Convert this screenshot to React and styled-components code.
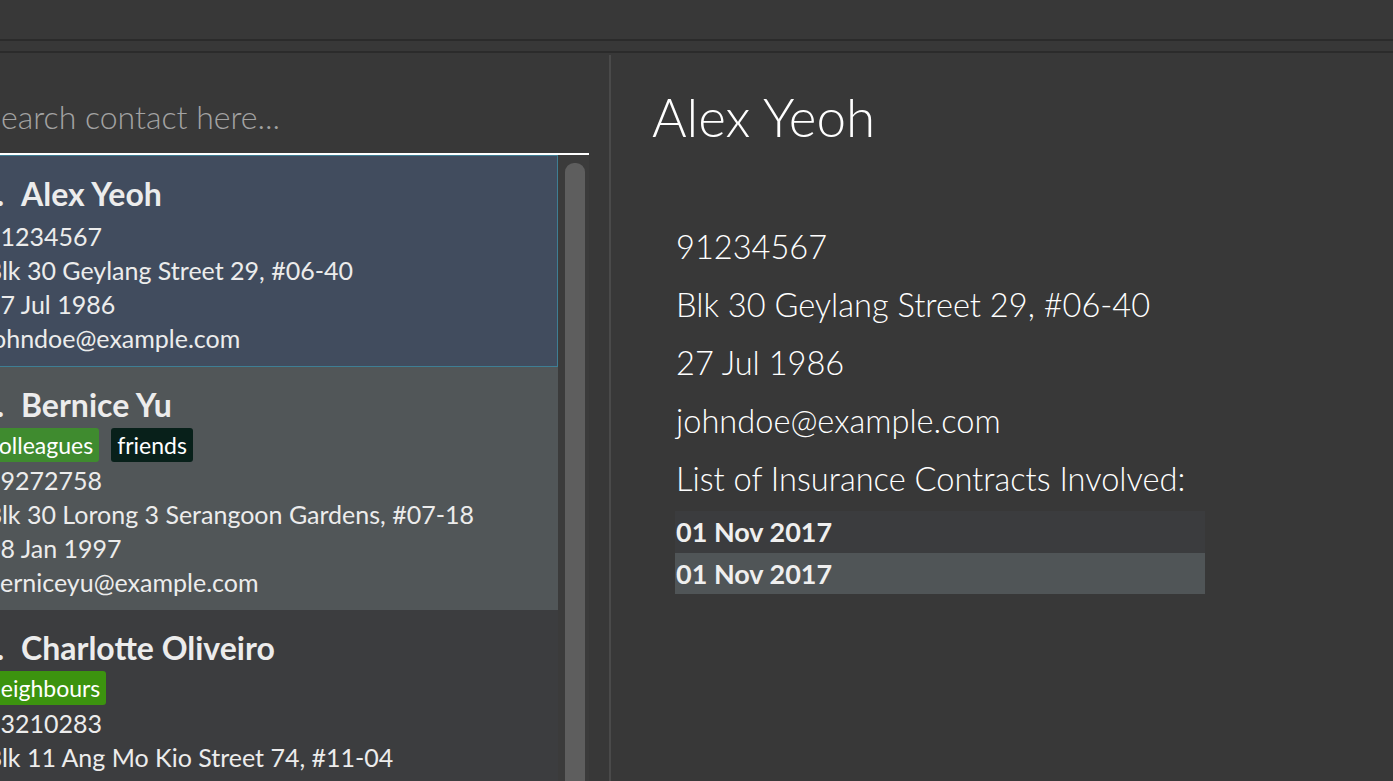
import React from 'react';
import styled, {createGlobalStyle} from 'styled-components';

const GlobalStyle = createGlobalStyle`
  html, body {
    margin: 0;
    padding: 0;
    background: #383838;
    overflow: hidden;
  }
  body {
    font-family: Lato, "Open Sans", sans-serif;
  }
`

const contacts = [
  {
    name: 'Alex Yeoh',
    tags: [],
    phone: '91234567',
    address: 'Blk 30 Geylang Street 29, #06-40',
    birthday: '27 Jul 1986',
    email: 'johndoe@example.com',
  },
  {
    name: 'Bernice Yu',
    tags: [{label: 'colleagues', color: '#3f8b2f'}, {label: 'friends', color: '#08201a'}],
    phone: '99272758',
    address: 'Blk 30 Lorong 3 Serangoon Gardens, #07-18',
    birthday: '08 Jan 1997',
    email: 'berniceyu@example.com',
  },
  {
    name: 'Charlotte Oliveiro',
    tags: [{label: 'neighbours', color: '#3c930f'}],
    phone: '93210283',
    address: 'Blk 11 Ang Mo Kio Street 74, #11-04',
    birthday: '11 Mar 1995',
    email: 'charlotte@example.com',
  },
]

const contracts = ['01 Nov 2017', '01 Nov 2017']

// top level
const Window = styled.div`
  width: 1393px;
  height: 781px;
  display: flex;
  flex-direction: column;
  background: #383838;
  overflow: hidden;
`

const MenuBar = styled.div`
  height: 39px;
  flex: none;
  background: #383838;
  border-bottom: 2px solid #2b2b2b;
`

const StatusBand = styled.div`
  height: 10px;
  flex: none;
  background: #383838;
  border-bottom: 2px solid #2b2b2b;
`

const Main = styled.div`
  flex: 1;
  display: flex;
  min-height: 0;
`

// left pane
const ListPane = styled.div`
  width: 589px;
  flex: none;
  padding-right: 20px;
  overflow: hidden;
  display: flex;
  flex-direction: column;
`

const ListInner = styled.div`
  margin-left: -30px;
  display: flex;
  flex-direction: column;
  flex: 1;
  min-height: 0;
`

const SearchBox = styled.div`
  height: 102px;
  flex: none;
  display: flex;
  align-items: center;
  padding-left: 14px;
  padding-top: 26px;
  box-sizing: border-box;
  border-bottom: 2px solid #ffffff;
  font-weight: 300;
  font-size: 32px;
  color: #a3a3a3;
  white-space: nowrap;
`

const ListRow = styled.div`
  flex: 1;
  display: flex;
  min-height: 0;
`

const CardColumn = styled.div`
  flex: 1;
  display: flex;
  flex-direction: column;
`

const Card = styled.div`
  flex: none;
  box-sizing: border-box;
  padding: ${p => p.selected ? '19px 0 11px 15px' : '19px 0 11px 16px'};
  background: ${p => p.bg};
  border: ${p => p.selected ? '1px solid #3e7e94' : 'none'};
  color: #ececec;
`

const NameRow = styled.div`
  display: flex;
  height: 36px;
  align-items: center;
  font-size: 32px;
  font-weight: 700;
  white-space: nowrap;
`

const Index = styled.span`
  width: 43px;
  margin-left: -8px;
  flex: none;
`

const TagRow = styled.div`
  display: flex;
  gap: 12px;
  margin-top: 6px;
  margin-left: -4px;
`

const Tag = styled.span`
  height: 34px;
  line-height: 34px;
  padding: 0 6px;
  border-radius: 3px;
  background: ${p => p.color};
  color: #ffffff;
  font-size: 23px;
  white-space: nowrap;
`

const InfoBlock = styled.div`
  margin-top: ${p => p.afterTags ? '1px' : '8px'};
`

const InfoLine = styled.div`
  height: 34px;
  line-height: 34px;
  font-size: 25px;
  white-space: nowrap;
`

const ScrollTrack = styled.div`
  width: 31px;
  flex: none;
  box-sizing: border-box;
  padding: 8px 4px 0 7px;
  background: #3b3b3b;
`

const ScrollThumb = styled.div`
  height: 100%;
  background: #5e5e5e;
  border-radius: 9px 9px 0 0;
`

const Divider = styled.div`
  width: 2px;
  flex: none;
  background: #4a4a4a;
  margin-top: 2px;
`

// right pane
const DetailPane = styled.div`
  flex: 1;
  padding: 34px 0 0 41px;
  color: #ffffff;
  font-weight: 300;
`

const Heading = styled.div`
  height: 60px;
  line-height: 60px;
  font-size: 53px;
  white-space: nowrap;
`

const DetailBody = styled.div`
  margin-top: 71px;
  margin-left: 24px;
`

const DetailLine = styled.div`
  height: 58px;
  line-height: 58px;
  font-size: 32.6px;
  white-space: nowrap;
`

const ContractTable = styled.div`
  width: 530px;
  margin-top: 3px;
  margin-left: -1px;
  display: flex;
  flex-direction: column;
`

const ContractRow = styled.div`
  height: ${p => p.h}px;
  line-height: ${p => p.h}px;
  padding-left: 1px;
  background: ${p => p.odd ? '#505557' : '#3b3c3e'};
  color: #efefef;
  font-size: 27px;
  font-weight: 700;
`

const cardBg = (i, selected) => {
  if (selected) return '#414c5e';
  return i % 2 === 1 ? '#515658' : '#3c3d3f';
}

const renderCard = (c, i) => {
  const selected = i === 0;
  return <Card key={c.name} selected={selected} bg={cardBg(i, selected)}>
    <NameRow>
      <Index>{i + 1}.</Index>
      {c.name}
    </NameRow>
    {c.tags.length > 0 && <TagRow>
      {c.tags.map(t => <Tag key={t.label} color={t.color}>{t.label}</Tag>)}
    </TagRow>}
    <InfoBlock afterTags={c.tags.length > 0}>
      <InfoLine>{c.phone}</InfoLine>
      <InfoLine>{c.address}</InfoLine>
      <InfoLine>{c.birthday}</InfoLine>
      <InfoLine>{c.email}</InfoLine>
    </InfoBlock>
  </Card>
}

export default function App() {
  const current = contacts[0];
  return <>
    <GlobalStyle/>
    <Window>
      <MenuBar/>
      <StatusBand/>
      <Main>
        <ListPane>
          <ListInner>
            <SearchBox>Search contact here...</SearchBox>
            <ListRow>
              <CardColumn>
                {contacts.map(renderCard)}
              </CardColumn>
              <ScrollTrack>
                <ScrollThumb/>
              </ScrollTrack>
            </ListRow>
          </ListInner>
        </ListPane>
        <Divider/>
        <DetailPane>
          <Heading>{current.name}</Heading>
          <DetailBody>
            <DetailLine>{current.phone}</DetailLine>
            <DetailLine>{current.address}</DetailLine>
            <DetailLine>{current.birthday}</DetailLine>
            <DetailLine>{current.email}</DetailLine>
            <DetailLine>List of Insurance Contracts Involved:</DetailLine>
            <ContractTable>
              {contracts.map((d, i) => <ContractRow key={i} odd={i % 2 === 1} h={i === 0 ? 42 : 41}>{d}</ContractRow>)}
            </ContractTable>
          </DetailBody>
        </DetailPane>
      </Main>
    </Window>
  </>
}
